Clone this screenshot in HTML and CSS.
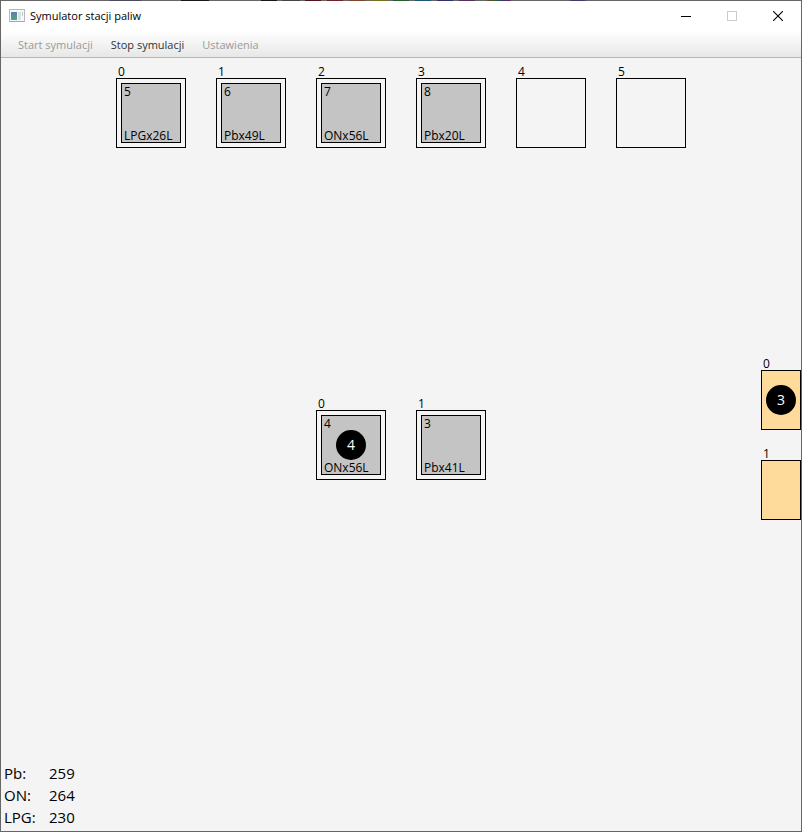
FILE: index.html
```html
<!DOCTYPE html>
<html lang="pl">
<head>
<meta charset="utf-8">
<title>Symulator stacji paliw</title>
<link rel="stylesheet" href="styles.css">
</head>
<body>
<div class="window">
  <header class="titlebar">
    <svg class="app-icon" width="16" height="14" viewBox="0 0 16 14" aria-hidden="true">
      <defs><linearGradient id="pane" x1="0" y1="0" x2="0" y2="1"><stop offset="0" stop-color="#5783ab"/><stop offset="1" stop-color="#4da583"/></linearGradient></defs>
      <rect x="0.5" y="0.5" width="15" height="12" fill="#f7f7f8" stroke="#b5b9bf"/>
      <rect x="1" y="12" width="14" height="1" fill="#a5a9ae"/>
      <rect x="2" y="3" width="6" height="8" fill="url(#pane)"/>
      <rect x="9" y="3" width="3" height="8" fill="#dde0e4"/>
      <rect x="13" y="3" width="1" height="4" fill="#b8d4c8"/>
    </svg>
    <h1 class="title">Symulator stacji paliw</h1>
    <div class="controls">
      <button class="control" type="button" aria-label="Minimalizuj"><svg width="10" height="10" viewBox="0 0 10 10" shape-rendering="crispEdges"><path d="M0 5.5H10" stroke="#000"/></svg></button>
      <button class="control" type="button" aria-label="Maksymalizuj" disabled><svg width="10" height="10" viewBox="0 0 10 10"><rect x="0.5" y="0.5" width="9" height="9" fill="none" stroke="#ccc"/></svg></button>
      <button class="control" type="button" aria-label="Zamknij"><svg width="10" height="10" viewBox="0 0 10 10"><path d="M0 0L10 10M10 0L0 10" stroke="#000" stroke-width="1.1"/></svg></button>
    </div>
  </header>
  <nav class="menu">
    <button class="menu-item" type="button" disabled>Start symulacji</button>
    <button class="menu-item" type="button">Stop symulacji</button>
    <button class="menu-item" type="button" disabled>Ustawienia</button>
  </nav>
  <main class="station">
    <section class="row queue">
      <div class="place"><span class="label">0</span><div class="slot"><div class="car"><span>5</span><span>LPGx26L</span></div></div></div>
      <div class="place"><span class="label">1</span><div class="slot"><div class="car"><span>6</span><span>Pbx49L</span></div></div></div>
      <div class="place"><span class="label">2</span><div class="slot"><div class="car"><span>7</span><span>ONx56L</span></div></div></div>
      <div class="place"><span class="label">3</span><div class="slot"><div class="car"><span>8</span><span>Pbx20L</span></div></div></div>
      <div class="place"><span class="label">4</span><div class="slot"></div></div>
      <div class="place"><span class="label">5</span><div class="slot"></div></div>
    </section>
    <section class="service">
      <div class="row pumps">
        <div class="place"><span class="label">0</span><div class="slot"><div class="car"><span>4</span><span>ONx56L</span><b class="client over">4</b></div></div></div>
        <div class="place"><span class="label">1</span><div class="slot"><div class="car"><span>3</span><span>Pbx41L</span></div></div></div>
      </div>
      <div class="desks">
        <div class="place"><span class="label">0</span><div class="desk"><b class="client">3</b></div></div>
        <div class="place"><span class="label">1</span><div class="desk"></div></div>
      </div>
    </section>
    <dl class="stock">
      <dt>Pb:</dt><dd>259</dd>
      <dt>ON:</dt><dd>264</dd>
      <dt>LPG:</dt><dd>230</dd>
    </dl>
  </main>
</div>
</body>
</html>
```
FILE: styles.css
```css
* { box-sizing: border-box; }

body {
  margin: 0;
  font-family: "Open Sans", "Noto Sans", sans-serif;
  font-size: 12px;
  color: #000;
}

.window {
  display: flex;
  flex-direction: column;
  min-height: 100vh;
  border: 1px solid #666;
  border-top: 0;
  background: #f4f4f4;
}

/* colour swatches showing along the top edge */
.window::before {
  content: "";
  height: 1px;
  background: linear-gradient(90deg,
    #666 109px, #4a4b58 109px 140px, #666 140px 180px, #1a161a 180px 208px,
    #666 208px 260px, #1a161a 260px 276px, #666 276px 281px, #444 281px 299px,
    #666 299px 304px, #4f1420 304px 320px, #666 320px 326px, #71202a 326px 342px,
    #666 342px 348px, #7b482b 348px 364px, #666 364px 370px, #77701e 370px 386px,
    #666 386px 392px, #245c34 392px 408px, #666 408px 414px, #1e5773 414px 430px,
    #666 430px 436px, #2f3168 436px 452px, #666 452px 458px, #55305a 458px 474px,
    #666 474px 485px, #73402b 487px, #35652b 494px, #28406b 500px, #602060 509px,
    #666 510px 568px, #49366b 570px 583px, #666 586px);
}

.titlebar {
  display: flex;
  align-items: center;
  height: 30px;
  padding-left: 8px;
  background: #fff;
}

.title {
  flex: 1;
  margin: 0 0 0 5px;
  font-size: 11px;
  font-weight: 400;
  line-height: 14px;
}

.controls { display: flex; }

.control {
  display: grid;
  place-items: center;
  width: 46px;
  height: 30px;
  padding: 0;
  border: 0;
  background: none;
}

.menu {
  display: flex;
  height: 27px;
  padding: 0 8px;
  border-bottom: 1px solid #b5b5b5;
  background: linear-gradient(#fff, #e7e7e7);
}

.menu-item {
  padding: 0 9px;
  border: 0;
  background: none;
  font: inherit;
  font-size: 11px;
  color: #333;
}

.menu-item:disabled { color: #9a9a9a; }

.station {
  flex: 1;
  display: grid;
  grid-template-rows: 1fr auto 1fr;
}

.row {
  display: flex;
  justify-content: center;
  align-items: flex-start;
  gap: 30px;
}

.queue { padding-top: 6px; }

.label {
  display: block;
  height: 14px;
  padding-left: 2px;
  line-height: 16px;
}

.slot {
  width: 70px;
  height: 70px;
  padding: 4px;
  border: 1px solid #000;
}

.car {
  position: relative;
  display: flex;
  flex-direction: column;
  justify-content: space-between;
  height: 100%;
  padding: 1px 2px 0;
  border: 1px solid #000;
  background: #c4c4c4;
  line-height: 12px;
}

.car > span:first-child { line-height: 14px; }

.client {
  display: block;
  width: 30px;
  height: 30px;
  border-radius: 50%;
  background: #000;
  color: #fff;
  font-size: 14px;
  font-weight: 400;
  line-height: 30px;
  text-align: center;
}

.over {
  position: absolute;
  inset: 0;
  margin: auto;
}

.service {
  display: grid;
  grid-template-columns: 1fr auto 1fr;
  align-items: center;
  padding-bottom: 14px;
}

.pumps { grid-column: 2; }

.desks {
  display: grid;
  gap: 16px;
  justify-self: end;
}

.desk {
  display: grid;
  place-items: center;
  width: 40px;
  height: 60px;
  border: 1px solid #000;
  background: #ffdb9b;
}

.stock {
  align-self: end;
  display: grid;
  grid-template-columns: 45px auto;
  justify-content: start;
  margin: 0;
  padding: 0 3px 3px;
  font-size: 15px;
  line-height: 22px;
}

.stock dd { margin: 0; }
```
